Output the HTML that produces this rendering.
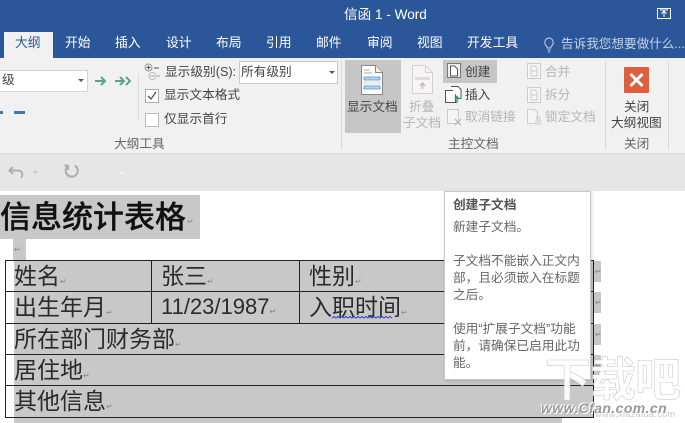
<!DOCTYPE html>
<html><head><meta charset="utf-8"><style>
html,body{margin:0;padding:0;background:#fff}
body{width:685px;height:423px;overflow:hidden;position:relative;font-family:"Liberation Sans","Noto Sans CJK SC",sans-serif}
#w{position:absolute;left:0;top:0;width:685px;height:423px;overflow:hidden;filter:blur(.35px)}
.a{position:absolute;white-space:nowrap;line-height:1}
.r{font-size:12.7px;color:#444}
.d{color:#b5b5b5}
.t{color:#fff;font-size:12.8px;top:37px}
.b{background:#c8c8c8}
.l{background:#222}
.p{font-size:8px;color:#888}
.c{font-size:23px;color:#2a2a2a}
.n{font-size:22px}
.tip{font-size:12.7px;color:#666;left:453px}
svg{position:absolute;overflow:visible}
</style></head><body><div id="w">
<div class="a" style="left:0;top:0;width:685px;height:58px;background:#2b579a"></div>
<div class="a" style="left:344px;top:8px;font-size:13.6px;color:#fff">信函 1 - Word</div>
<svg style="left:657px;top:8px" width="15" height="12"><rect x=".5" y=".5" width="13" height="10" fill="none" stroke="#fff"/><path d="M7 9V3M4.500 5.500L7 3l2.500 2.500M3 2h8" stroke="#fff" fill="none"/></svg>
<div class="a" style="left:4px;top:32px;width:49px;height:26px;background:#f1f1f1"></div>
<div class="a t" style="left:15px;color:#2b579a">大纲</div>
<div class="a t" style="left:65px">开始</div>
<div class="a t" style="left:115px">插入</div>
<div class="a t" style="left:166px">设计</div>
<div class="a t" style="left:216px">布局</div>
<div class="a t" style="left:266px">引用</div>
<div class="a t" style="left:316px">邮件</div>
<div class="a t" style="left:367px">审阅</div>
<div class="a t" style="left:417px">视图</div>
<div class="a t" style="left:467px">开发工具</div>
<svg style="left:543px;top:37px" width="12" height="16"><path d="M6 1a4.500 4.500 0 0 0-2.500 8c.6.6.7 1.200.7 2h3.600c0-.8.100-1.400.7-2A4.500 4.500 0 0 0 6 1zM4.500 13h3M5 15h2" fill="none" stroke="#c6d2e6"/></svg>
<div class="a" style="left:561px;top:38px;font-size:12.6px;color:#c6d2e6">告诉我您想要做什么...</div>

<div class="a" style="left:0;top:58px;width:685px;height:96px;background:#f1f1f1"></div>
<div class="a" style="left:0;top:70px;width:88px;height:22px;background:#fff;border:1px solid #d4d4d4;border-left:0;box-sizing:border-box"></div>
<div class="a r" style="left:2px;top:74px">级</div>
<svg style="left:78px;top:79px" width="6" height="4"><path d="M0 0h6L3 3z" fill="#555"/></svg>
<svg style="left:94px;top:74px" width="40" height="14"><path d="M1 7h10M7 3l4 4-4 4M21 7h9M26 3l4 4-4 4M32 3l4 4-4 4" fill="none" stroke="#5aa58a" stroke-width="2"/></svg>
<div class="a" style="left:-1px;top:111px;width:4px;height:3px;background:#3d78b5"></div>
<div class="a" style="left:14px;top:111px;width:11px;height:3px;background:#3d78b5"></div>
<div class="a" style="left:138px;top:74px;width:1px;height:46px;background:#dcdcdc"></div>
<svg style="left:144px;top:63px" width="17" height="18"><circle cx="4.500" cy="4.500" r="3.500" fill="#eee" stroke="#999"/><path d="M2.500 4.500h4M4.500 2.500v4M10 5h5" stroke="#555"/><circle cx="8.500" cy="13" r="3.500" fill="#f5f5f5" stroke="#bbb"/><path d="M6.500 13h4M13 13h3" stroke="#999"/></svg>
<div class="a r" style="left:165px;top:66px">显示级别(S):</div>
<div class="a" style="left:239px;top:61px;width:99px;height:23px;background:#fff;border:1px solid #c8c8c8;box-sizing:border-box"></div>
<div class="a r" style="left:241px;top:66px">所有级别</div>
<svg style="left:329px;top:71px" width="6" height="4"><path d="M0 0h6L3 3z" fill="#555"/></svg>
<div class="a" style="left:145px;top:89px;width:12px;height:12px;background:#fff;border:1px solid #aaa"></div>
<svg style="left:147px;top:91px" width="11" height="11"><path d="M1 5l3 3 5-7" fill="none" stroke="#555" stroke-width="1.300"/></svg>
<div class="a r" style="left:164px;top:89px">显示文本格式</div>
<div class="a" style="left:145px;top:113px;width:12px;height:12px;background:#fff;border:1px solid #bbb"></div>
<div class="a r" style="left:164px;top:113px">仅显示首行</div>
<div class="a r" style="left:114px;top:138px;color:#666">大纲工具</div>
<div class="a" style="left:341px;top:61px;width:1px;height:89px;background:#d8d8d8"></div>

<div class="a" style="left:345px;top:60px;width:56px;height:73px;background:#c6c6c6"></div>
<svg style="left:361px;top:65px" width="22" height="30"><path d="M.5.500h14l7 7v22H.5z" fill="#fff" stroke="#888"/><path d="M14.500.500v7h7" fill="#eee" stroke="#888"/><path d="M3 5h6M3 8h8" stroke="#aaa"/><rect x="3" y="12" width="16" height="3" fill="#b9d3ec" stroke="#4c8ac6" stroke-width=".7"/><rect x="3" y="17" width="16" height="2" fill="#fff" stroke="#bbb" stroke-width=".5"/><rect x="3" y="21" width="16" height="3" fill="#b9d3ec" stroke="#4c8ac6" stroke-width=".7"/></svg>
<div class="a r" style="left:347px;top:101px">显示文档</div>
<svg style="left:412px;top:65px" width="21" height="30"><path d="M.5.500h13l7 7v21H.5z" fill="#f8f4f6" stroke="#d6d0d3"/><path d="M13.500.500v7h7" fill="none" stroke="#d6d0d3"/><rect x="3" y="12" width="15" height="3" fill="#ddd"/><path d="M10.500 24v-5M8 21l2.500-3 2.500 3" stroke="#c4bcc0" fill="none" stroke-width="1.500"/></svg>
<div class="a r d" style="left:409px;top:101px">折叠</div>
<div class="a r d" style="left:403px;top:117px">子文档</div>
<div class="a" style="left:443px;top:60px;width:54px;height:23px;background:#c6c6c6"></div>
<svg style="left:447px;top:63px" width="14" height="17"><rect x=".5" y=".5" width="13" height="14" fill="#eee" stroke="#777"/><path d="M3.500 3h4l3 3v7h-7z" fill="#fff" stroke="#555"/></svg>
<div class="a r" style="left:465px;top:66px">创建</div>
<svg style="left:445px;top:86px" width="18" height="18"><rect x=".5" y="4.500" width="10" height="12" fill="#fff" stroke="#555"/><path d="M6 .5h7l3 3v9h-3" fill="#fff" stroke="#555"/><path d="M12 17v-6M10 13l2-2.500 2 2.500" stroke="#3a9a6a" fill="none" stroke-width="1.500"/></svg>
<div class="a r" style="left:465px;top:89px">插入</div>
<svg style="left:447px;top:109px" width="16" height="17"><rect x=".5" y=".5" width="11" height="14" fill="#f5f5f5" stroke="#c8c8c8"/><path d="M8 10l6 6M14 10l-6 6" stroke="#bbb" stroke-width="1.500"/></svg>
<div class="a r d" style="left:465px;top:111px">取消链接</div>
<svg style="left:527px;top:63px" width="14" height="16"><rect x=".5" y=".5" width="13" height="15" fill="#f5f5f5" stroke="#ccc"/><path d="M4 3h4l2 2v8H4zM4 8h6" fill="none" stroke="#ccc"/></svg>
<div class="a r d" style="left:545px;top:66px">合并</div>
<svg style="left:527px;top:87px" width="14" height="16"><rect x=".5" y=".5" width="13" height="15" fill="#f5f5f5" stroke="#ccc"/><path d="M4 3h4l2 2v8H4zM4 8h6" fill="none" stroke="#ccc"/></svg>
<div class="a r d" style="left:545px;top:89px">拆分</div>
<svg style="left:527px;top:109px" width="15" height="17"><path d="M.5.500h7l3 3v11H.5z" fill="#f5f5f5" stroke="#ccc"/><rect x="8" y="10" width="6" height="6" fill="#ddd"/><path d="M9.500 10V8h3v2" fill="none" stroke="#ccc"/></svg>
<div class="a r d" style="left:545px;top:111px">锁定文档</div>
<div class="a r" style="left:448px;top:138px;color:#666">主控文档</div>
<div class="a" style="left:605px;top:61px;width:1px;height:89px;background:#d8d8d8"></div>
<div class="a" style="left:624px;top:67px;width:25px;height:26px;background:#dd5f3f;border-radius:1px"></div>
<svg style="left:624px;top:67px" width="25" height="26"><path d="M6.500 7l12 12M18.500 7l-12 12" stroke="#fff" stroke-width="3"/></svg>
<div class="a r" style="left:624px;top:101px">关闭</div>
<div class="a r" style="left:611px;top:117px">大纲视图</div>
<div class="a r" style="left:624px;top:138px;color:#666">关闭</div>
<div class="a" style="left:668px;top:61px;width:1px;height:89px;background:#d8d8d8"></div>
<div class="a" style="left:0;top:153px;width:685px;height:2px;background:#dcdcdc"></div>

<div class="a" style="left:0;top:155px;width:685px;height:36px;background:#e6e6e6"></div>
<svg style="left:8px;top:165px" width="30" height="16"><path d="M5 2L1.500 5.500 5 9M2 5.500h8a4 4 0 0 1 3 7" fill="none" stroke="#b0b0b0" stroke-width="2"/><path d="M25 6h5l-2.500 3z" fill="#c8c8c8"/></svg>
<svg style="left:64px;top:163px" width="16" height="16"><path d="M4 3a6 6 0 1 0 7-.3M4 2V7M4 2.500H.5" fill="none" stroke="#b0b0b0" stroke-width="2.200"/></svg>
<svg style="left:120px;top:170px" width="6" height="6"><path d="M0 2h5L2.500 5z" fill="#f5f5f5"/></svg>

<div class="a b" style="left:0;top:195px;width:200px;height:44px"></div>
<div class="a" style="left:0;top:199px;font-size:31px;font-weight:500;font-family:'Noto Sans CJK SC',sans-serif;color:#111;-webkit-text-stroke:.3px #111">信息统计表格</div>
<div class="a p" style="left:187px;top:218px">↵</div>
<div class="a b" style="left:13px;top:239px;width:13px;height:21px"></div>
<div class="a p" style="left:14px;top:246px">↵</div>

<div class="a b" style="left:14px;top:260px;width:548px;height:163px"></div>
<div class="a b" style="left:562px;top:260px;width:31px;height:157px"></div>
<div class="a b" style="left:593px;top:261px;width:8px;height:21px"></div>
<div class="a b" style="left:593px;top:292px;width:8px;height:21px"></div>
<div class="a b" style="left:593px;top:324px;width:8px;height:21px"></div>
<div class="a b" style="left:593px;top:355px;width:8px;height:21px"></div>

<div class="a l" style="left:5px;top:260px;width:589px;height:1px"></div>
<div class="a l" style="left:5px;top:291px;width:589px;height:1px"></div>
<div class="a l" style="left:5px;top:323px;width:589px;height:1px"></div>
<div class="a l" style="left:5px;top:354px;width:589px;height:1px"></div>
<div class="a l" style="left:5px;top:385px;width:589px;height:1px"></div>
<div class="a l" style="left:5px;top:417px;width:589px;height:1px"></div>
<div class="a l" style="left:5px;top:260px;width:1px;height:158px"></div>
<div class="a l" style="left:593px;top:260px;width:1px;height:158px"></div>
<div class="a l" style="left:151px;top:260px;width:1px;height:63px"></div>
<div class="a l" style="left:299px;top:260px;width:1px;height:63px"></div>

<div class="a c" style="left:14px;top:265px">姓名<span class="p">↵</span></div>
<div class="a c" style="left:161px;top:265px">张三<span class="p">↵</span></div>
<div class="a c" style="left:309px;top:265px">性别<span class="p">↵</span></div>
<div class="a c" style="left:14px;top:296px">出生年月<span class="p">↵</span></div>
<div class="a c n" style="left:161px;top:296px">11/23/1987<span class="p">↵</span></div>
<div class="a c" style="left:309px;top:296px">入职时间<span class="p">↵</span></div>
<svg style="left:332px;top:316px" width="70" height="4"><path d="M0 2l2-1.500 2 1.500 2-1.500 2 1.500 2-1.500 2 1.500 2-1.500 2 1.500 2-1.500 2 1.500 2-1.500 2 1.500 2-1.500 2 1.500 2-1.500 2 1.500 2-1.500 2 1.500 2-1.500 2 1.500 2-1.500 2 1.500 2-1.500 2 1.500 2-1.500 2 1.500 2-1.500 2 1.500 2-1.500 2 1.500" fill="none" stroke="#3a3ad0"/></svg>
<div class="a c" style="left:14px;top:328px">所在部门财务部<span class="p">↵</span></div>
<div class="a c" style="left:14px;top:359px">居住地<span class="p">↵</span></div>
<div class="a c" style="left:14px;top:390px">其他信息<span class="p">↵</span></div>
<div class="a p" style="left:595px;top:268px">↵</div>
<div class="a p" style="left:595px;top:299px">↵</div>
<div class="a p" style="left:595px;top:331px">↵</div>
<div class="a p" style="left:595px;top:362px">↵</div>

<div class="a" style="left:444px;top:191px;width:147px;height:189px;background:#fff;border:1px solid #c8c8c8;box-sizing:border-box;box-shadow:1px 1px 3px rgba(0,0,0,.15)"></div>
<div class="a tip" style="top:199px;font-weight:bold;color:#555">创建子文档</div>
<div class="a tip" style="top:221px">新建子文档。</div>
<div class="a tip" style="top:255px">子文档不能嵌入正文内</div>
<div class="a tip" style="top:272px">部，且必须嵌入在标题</div>
<div class="a tip" style="top:289px">之后。</div>
<div class="a tip" style="top:323px">使用“扩展子文档”功能</div>
<div class="a tip" style="top:340px">前，请确保已启用此功</div>
<div class="a tip" style="top:357px">能。</div>

<div class="a" style="left:545px;top:357px;font-size:46px;font-weight:bold;color:rgba(255,255,255,.9);-webkit-text-stroke:.6px rgba(190,190,190,.8);letter-spacing:-1px">下载吧</div>
<div class="a" style="left:595px;top:410px;font-size:9px;color:#c4c4c4;letter-spacing:.4px">www.xiazaiba.com</div>
<div class="a" style="left:541px;top:401px;font-size:14px;font-weight:bold;font-style:italic;color:#999;letter-spacing:.4px;text-shadow:1px 1px 0 #fff,-1px -1px 0 #fff">www.Cfan.com.cn</div>
</div></body></html>
